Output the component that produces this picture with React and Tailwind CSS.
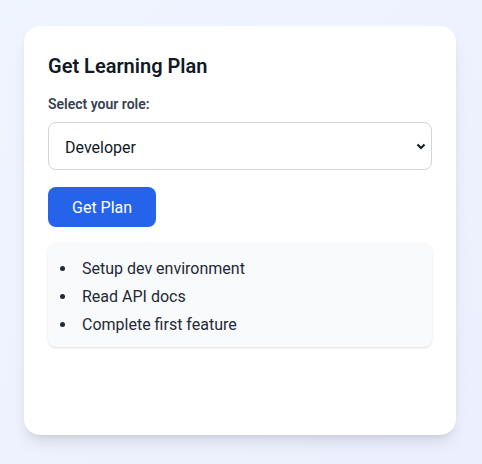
import React from "react";

export default function App() {
  return (
    <div
      className="min-h-screen flex items-start px-6 pt-[26px] bg-gradient-to-br from-[#eff5ff] to-[#eceffd]"
      style={{ fontFamily: 'Roboto, "Noto Sans", sans-serif' }}
    >
      <div className="w-[432px] h-[409px] bg-white rounded-2xl shadow-lg p-6">
        <h2 className="text-xl leading-7 font-semibold text-[#111827] pt-[2px] mb-[14px]">Get Learning Plan</h2>
        <label className="block text-sm font-semibold text-[#374151] mb-2">Select your role:</label>
        <div className="relative">
          <select
            defaultValue="Developer"
            className="w-full h-12 appearance-none border border-[#d1d5db] rounded-lg px-4 pt-[3px] text-base text-[#111827] bg-white"
          >
            <option>Developer</option>
            <option>Designer</option>
            <option>Manager</option>
          </select>
          <svg
            className="absolute right-[6px] top-[21px] pointer-events-none"
            width="10"
            height="7"
            viewBox="0 0 10 7"
          >
            <path d="M1.5 1.5 L5 5 L8.5 1.5" fill="none" stroke="#111827" strokeWidth="2" />
          </svg>
        </div>
        <button className="mt-[17px] h-10 px-6 pt-[2px] bg-[#2563eb] text-white text-base rounded-lg">Get Plan</button>
        <div className="mt-4 bg-[#f9fafb] rounded-lg shadow-sm px-3 pt-[14px] pb-[10px]">
          <ul className="list-disc list-inside space-y-1 text-base text-[#1f2937]">
            <li>Setup dev environment</li>
            <li>Read API docs</li>
            <li>Complete first feature</li>
          </ul>
        </div>
      </div>
    </div>
  );
}
